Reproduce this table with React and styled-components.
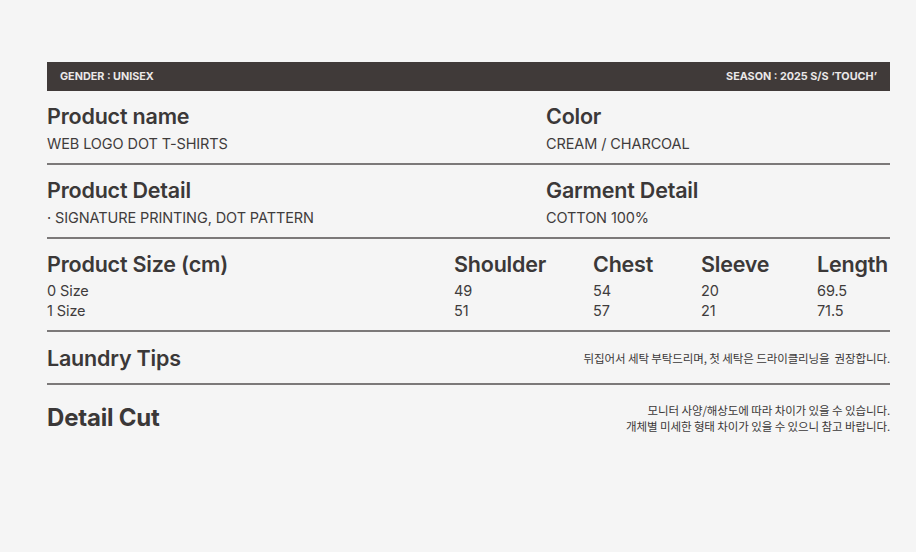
import React from 'react';
import styled, { createGlobalStyle } from 'styled-components';

const GlobalStyle = createGlobalStyle`
    body {
        margin: 0;
        background: #f5f5f5;
        font-family: 'Inter', 'Noto Sans CJK KR', sans-serif;
        color: #3b3838;
    }
`;

const Page = styled.div`
    width: 916px;
    height: 552px;
    box-sizing: border-box;
    padding: 62px 26px 0 47px;
`;

const TopBar = styled.div`
    height: 29px;
    background: #403a39;
    display: flex;
    align-items: center;
    justify-content: space-between;
    padding: 0 13px;
    color: #ebe8e8;
    font-size: 10.8px;
    font-weight: 700;
    letter-spacing: 0;
`;

const Section = styled.div`
    display: grid;
    grid-template-columns: ${p => p.cols || '499px 1fr'};
    align-items: ${p => p.center ? 'center' : 'start'};
    padding: ${p => p.pad || '12px 0 9px'};
    border-bottom: ${p => p.last ? 'none' : '2px solid #7c7979'};
`;

const Cell = styled.div`
    display: flex;
    flex-direction: column;
`;

const Title = styled.div`
    font-size: ${p => p.big ? '24px' : '21.5px'};
    font-weight: ${p => p.big ? 700 : 600};
    letter-spacing: ${p => p.big ? '-0.2px' : '-0.2px'};
    line-height: 26px;
    color: #3b3838;
`;

const Value = styled.div`
    font-size: 14.5px;
    letter-spacing: -0.1px;
    line-height: 20px;
    color: #3f3c3c;
    margin-top: ${p => p.gap || '5px'};
`;

const Note = styled.div`
    justify-self: end;
    text-align: right;
    font-family: 'Noto Sans CJK KR', sans-serif;
    font-size: 11.5px;
    letter-spacing: -0.1px;
    line-height: 16px;
    color: #3b3838;
`;

const sizes = [
    { label: 'Shoulder', values: ['49', '51'] },
    { label: 'Chest', values: ['54', '57'] },
    { label: 'Sleeve', values: ['20', '21'] },
    { label: 'Length', values: ['69.5', '71.5'] },
];

const App = () => {
    return (
        <Page>
            <GlobalStyle />
            <TopBar>
                <span>GENDER : UNISEX</span>
                <span>SEASON : 2025 S/S ‘TOUCH’</span>
            </TopBar>
            <Section>
                <Cell>
                    <Title>Product name</Title>
                    <Value>WEB LOGO DOT T-SHIRTS</Value>
                </Cell>
                <Cell>
                    <Title>Color</Title>
                    <Value>CREAM / CHARCOAL</Value>
                </Cell>
            </Section>
            <Section>
                <Cell>
                    <Title>Product Detail</Title>
                    <Value>· SIGNATURE PRINTING, DOT PATTERN</Value>
                </Cell>
                <Cell>
                    <Title>Garment Detail</Title>
                    <Value>COTTON 100%</Value>
                </Cell>
            </Section>
            <Section cols="407px 139px 108px 116px 1fr" pad="12px 0 9px">
                <Cell>
                    <Title>Product Size (cm)</Title>
                    <Value gap="4px">0 Size</Value>
                    <Value gap="0">1 Size</Value>
                </Cell>
                {sizes.map(s => (
                    <Cell key={s.label}>
                        <Title>{s.label}</Title>
                        <Value gap="4px">{s.values[0]}</Value>
                        <Value gap="0">{s.values[1]}</Value>
                    </Cell>
                ))}
            </Section>
            <Section cols="1fr auto" center pad="13px 0 12px">
                <Title>Laundry Tips</Title>
                <Note>뒤집어서 세탁 부탁드리며, 첫 세탁은 드라이클리닝을&nbsp; 권장합니다.</Note>
            </Section>
            <Section cols="1fr auto" center last pad="17px 0">
                <Title big>Detail Cut</Title>
                <Note>
                    모니터 사양/해상도에 따라 차이가 있을 수 있습니다.<br />
                    개체별 미세한 형태 차이가 있을 수 있으니 참고 바랍니다.
                </Note>
            </Section>
        </Page>
    );
};

export default App;
